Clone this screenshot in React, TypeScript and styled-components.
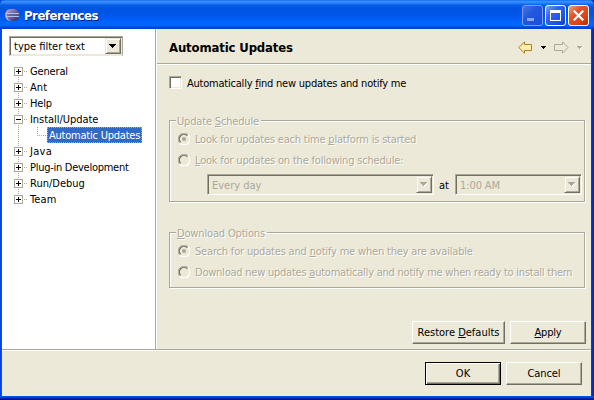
import React from "react";
import styled, { createGlobalStyle, css } from "styled-components";

const face = "#ece9d8";
const shade = "#aca899";
const dark = "#716f64";

const GlobalStyle = createGlobalStyle`
  * { box-sizing: border-box; }
  body { margin: 0; overflow: hidden; }
`;

const Window = styled.div`
  width: 594px;
  height: 400px;
  display: flex;
  flex-direction: column;
  overflow: hidden;
  background: linear-gradient(90deg, #0831d9 0, #0058ee 1px, #0058ee 2px, #0046e0 591px, #0037dc 592px, #001ea0 594px);
  font: 11px/16px "DejaVu Sans Condensed", "DejaVu Sans", sans-serif;
  color: #000;
  white-space: nowrap;
`;

const TitleBar = styled.header`
  height: 29px;
  flex: none;
  display: flex;
  align-items: flex-start;
  padding: 5px 5px 0 5px;
  border-radius: 5px 5px 0 0;
  background: linear-gradient(180deg, #0b5be8 0, #3a93ff 1px, #2b83fb 3px, #0560e8 5px, #0054e3 8px, #0055e5 14px, #005bf5 19px, #0066ff 23px, #0062fb 26px, #0046d8 27px, #003dd0 29px);
`;

const Title = styled.h1`
  margin: 3px auto 0 4px;
  font: bold 13px/16px "DejaVu Sans Condensed", "DejaVu Sans", sans-serif;
  letter-spacing: -0.47px;
  color: #fff;
  text-shadow: 1px 1px 0 #0a1f86;
`;

const Caption = styled.span<{ $kind: "min" | "max" | "close" }>`
  width: 21px;
  height: 21px;
  margin-left: 2px;
  border: 1px solid ${(p) => (p.$kind === "min" ? "#7d9cf0" : "#fff")};
  border-radius: 3px;
  display: block;
  background: ${(p) =>
    p.$kind === "close"
      ? "linear-gradient(135deg, #f0a085 0, #e2532a 35%, #dc4415 70%, #b02c08 100%)"
      : p.$kind === "max"
        ? "linear-gradient(135deg, #7ba5f9 0, #2c66ee 35%, #1e55e6 70%, #1040c8 100%)"
        : "linear-gradient(135deg, #4a74e6 0, #2259dd 40%, #164fdc 100%)"};
  svg { display: block; }
`;

const Client = styled.div`
  flex: none;
  width: 589px;
  height: 367px;
  margin-left: 2px;
  display: flex;
  flex-direction: column;
  background: ${face};
`;

const BottomEdge = styled.div`
  height: 4px;
  flex: none;
  background: linear-gradient(180deg, #0050e8 0 1px, #0040dc 1px 2px, #0020ac 2px 3px, #00138c 3px 4px);
`;

const Main = styled.div`
  height: 322px;
  flex: none;
  display: flex;
  border-bottom: 1px solid #fff;
  box-shadow: inset 0 -1px ${shade};
`;

const Sidebar = styled.aside`
  width: 155px;
  flex: none;
  height: 320px;
  padding: 7px 0 0 7px;
  background: #fff;
  border-right: 1px solid #fff;
  box-shadow: inset -1px 0 ${shade};
`;

const ComboBox = styled.div<{ $w: number; $h: number; $disabled?: boolean }>`
  width: ${(p) => p.$w}px;
  height: ${(p) => p.$h}px;
  flex: none;
  display: flex;
  justify-content: space-between;
  border: 1px solid;
  border-color: ${(p) => (p.$disabled ? `${shade} #fff #fff ${shade}` : `${shade} ${shade} ${face} ${shade}`)};
  box-shadow: inset 1px 1px ${dark}, inset -1px -1px ${face};
  background: ${(p) => (p.$disabled ? face : "#fff")};
  color: ${(p) => (p.$disabled ? shade : "#000")};
  padding: 1px 1px 1px 4px;
  line-height: ${(p) => p.$h - 2}px;
`;

const DropButton = styled.span`
  width: 16px;
  height: 100%;
  display: grid;
  place-items: center;
  background: ${face};
  border: 1px solid;
  border-color: ${face} ${dark} ${dark} ${face};
  box-shadow: inset 1px 1px #fff, inset -1px -1px ${shade};
`;

const Value = styled.span<{ $ls?: number }>`
  letter-spacing: ${(p) => p.$ls ?? 0}px;
`;

const Label = styled(Value)`
  padding-top: 2px;
`;

const Etched = styled(Label)`
  color: ${shade};
  text-shadow: 1px 1px 0 #fff;
`;

const Key = styled.span`
  text-decoration: underline;
  text-decoration-thickness: 1px;
  text-underline-offset: 1px;
  text-decoration-skip-ink: none;
`;

const Tree = styled.ul`
  list-style: none;
  margin: 7px 0 0 5px;
  padding: 0;
`;

const TreeRow = styled.li<{ $first?: boolean; $last?: boolean }>`
  height: 16px;
  display: flex;
  align-items: center;
  background: repeating-linear-gradient(180deg, ${shade} 0 1px, transparent 1px 2px) 4px ${(p) => (p.$first ? 8 : 0)}px / 1px ${(p) => (p.$last ? 8 : 16)}px no-repeat;
`;

const Expander = styled.svg`
  display: block;
  flex: none;
`;

const Connector = styled.span`
  width: 4px;
  height: 1px;
  margin: 0 2px 0 1px;
  background: repeating-linear-gradient(90deg, ${shade} 0 1px, transparent 1px 2px);
`;

const Branch = styled.span`
  width: 10px;
  height: 9px;
  margin: 0 0 8px 23px;
  background:
    repeating-linear-gradient(180deg, ${shade} 0 1px, transparent 1px 2px) 0 0 / 1px 9px no-repeat,
    repeating-linear-gradient(90deg, ${shade} 0 1px, transparent 1px 2px) 0 8px / 10px 1px no-repeat;
`;

const Selected = styled.span`
  width: 95px;
  height: 16px;
  line-height: 16px;
  padding-left: 1px;
  background: #316ac5;
  color: #fff;
  border: 1px dotted #e0a040;
  letter-spacing: -0.22px;
`;

const Page = styled.main`
  flex: 1;
  height: 320px;
  display: flex;
  flex-direction: column;
`;

const PageHeader = styled.div`
  height: 36px;
  flex: none;
  display: flex;
  align-items: center;
  padding: 0 7px 0 12px;
  border-bottom: 1px solid #fff;
  box-shadow: inset 0 -1px ${shade};
`;

const PageTitle = styled.h2`
  margin: 2px auto 0 0;
  font: bold 13px/18px "DejaVu Sans Condensed", "DejaVu Sans", sans-serif;
  letter-spacing: -0.14px;
`;

const CheckRow = styled.div`
  display: flex;
  align-items: center;
  gap: 5px;
  height: 17px;
  margin: 9px 0 0 12px;
`;

const CheckBox = styled.span`
  width: 13px;
  height: 13px;
  background: #fff;
  border: 1px solid;
  border-color: ${shade} #fff #fff ${shade};
  box-shadow: inset 1px 1px ${dark}, inset -1px -1px ${face};
`;

const Group = styled.fieldset<{ $h: number; $top: number }>`
  width: 416px;
  height: ${(p) => p.$h}px;
  flex: none;
  min-width: 0;
  margin: ${(p) => p.$top}px 0 0 12px;
  padding: 0 0 0 8px;
  border: 1px solid ${shade};
  box-shadow: 1px 1px #fff, inset 1px 1px #fff;
`;

const Legend = styled.legend<{ $w: number }>`
  width: ${(p) => p.$w}px;
  height: 15px;
  line-height: 18px;
  margin-left: -2px;
  padding: 0 1px;
  background: ${face};
`;

const RadioRow = styled.div<{ $top: number }>`
  height: 16px;
  margin-top: ${(p) => p.$top}px;
  display: flex;
  align-items: center;
  gap: 5px;
`;

const ScheduleRow = styled.div`
  display: flex;
  align-items: center;
  margin: 6px 0 0 29px;
`;

const At = styled.span`
  width: 21px;
  padding: 2px 0 0 5px;
`;

const ButtonRow = styled.div<{ $pad: string }>`
  display: flex;
  justify-content: flex-end;
  gap: 5px;
  padding: ${(p) => p.$pad};
`;

const Button = styled.button<{ $w: number; $default?: boolean; $ls?: number }>`
  width: ${(p) => p.$w}px;
  height: 23px;
  padding: 1px 0 0;
  font: inherit;
  line-height: 18px;
  letter-spacing: ${(p) => p.$ls ?? 0}px;
  color: #000;
  background: ${face};
  border: 1px solid;
  border-color: #fff ${dark} ${dark} #fff;
  box-shadow: inset -1px -1px ${shade};
  ${(p) =>
    p.$default &&
    css`
      border-color: #000;
      box-shadow: inset 1px 1px #fff, inset -1px -1px ${dark}, inset -2px -2px ${shade};
    `}
`;

const Arrows = styled.svg`
  display: block;
  margin-top: 2px;
`;

const Triangle = ({ disabled }: { disabled?: boolean }) => (
  <svg width="8" height="5" viewBox="0 0 8 5" shapeRendering="crispEdges">
    {disabled && <path d="M1 1h7v1h-1v1h-1v1h-1v1h-1v-1h-1v-1h-1v-1h-1z" fill="#fff" />}
    <path d="M0 0h7v1h-1v1h-1v1h-1v1h-1v-1h-1v-1h-1v-1h-1z" fill={disabled ? shade : "#000"} />
  </svg>
);

const Radio = ({ on }: { on?: boolean }) => (
  <svg width="12" height="12" viewBox="0 0 12 12">
    <path d="M1.8 10.2A5.5 5.5 0 0 1 10.2 1.8" fill="none" stroke={shade} />
    <path d="M2.7 9.3A4.5 4.5 0 0 1 9.3 2.7" fill="none" stroke={dark} strokeWidth="1.3" />
    <path d="M10.2 1.8A5.5 5.5 0 0 1 1.8 10.2" fill="none" stroke="#fff" strokeWidth="1.3" />
    {on && <circle cx="6" cy="6" r="2" fill={shade} />}
  </svg>
);

const EclipseIcon = () => (
  <svg width="15" height="16" viewBox="0 0 15 16">
    <defs>
      <linearGradient id="orb" x1="0" y1="0" x2="1" y2="1">
        <stop offset="0" stopColor="#b4a0cc" />
        <stop offset="0.5" stopColor="#6a5fa0" />
        <stop offset="1" stopColor="#2c2560" />
      </linearGradient>
    </defs>
    <ellipse cx="6" cy="10" rx="6" ry="6" fill="#c9a8c0" />
    <circle cx="8" cy="10" r="6.2" fill="url(#orb)" />
    <path d="M1 8.5h13M1 11.5h13" stroke="#b5c0ea" />
    <path d="M2 10h12" stroke="#57609c" />
  </svg>
);

const items: { name: string; open?: boolean; ls?: number }[] = [
  { name: "General", ls: -0.15 },
  { name: "Ant", ls: 0.1 },
  { name: "Help", ls: -0.14 },
  { name: "Install/Update", open: true, ls: -0.05 },
  { name: "Java", ls: 0.3 },
  { name: "Plug-in Development", ls: -0.27 },
  { name: "Run/Debug" },
  { name: "Team", ls: 0.1 },
];

export default function App() {
  return (
    <>
      <GlobalStyle />
      <Window>
        <TitleBar>
          <EclipseIcon />
          <Title>Preferences</Title>
          <Caption $kind="min">
            <svg width="19" height="19" shapeRendering="crispEdges"><path d="M4 12h7v3h-7z" fill="#8ba5f0" /></svg>
          </Caption>
          <Caption $kind="max">
            <svg width="19" height="19" shapeRendering="crispEdges"><path d="M4 4h11v11h-11zM5 7v7h9v-7z" fill="#fff" fillRule="evenodd" /></svg>
          </Caption>
          <Caption $kind="close">
            <svg width="19" height="19"><path d="M4.8 4.8l9.4 9.4M14.2 4.8l-9.4 9.4" stroke="#fff" strokeWidth="2.2" /></svg>
          </Caption>
        </TitleBar>
        <Client>
          <Main>
            <Sidebar>
              <ComboBox $w={114} $h={20}>
                <Value>type filter text</Value>
                <DropButton><Triangle /></DropButton>
              </ComboBox>
              <Tree>
                {items.map((item, i) => (
                  <React.Fragment key={item.name}>
                    <TreeRow $first={i === 0} $last={i === items.length - 1}>
                      <Expander width="9" height="9" shapeRendering="crispEdges">
                        <rect width="9" height="9" fill={shade} />
                        <rect x="1" y="1" width="7" height="7" fill="#fff" />
                        <path d={item.open ? "M2 4h5v1h-5z" : "M2 4h2v-2h1v2h2v1h-2v2h-1v-2h-2z"} fill="#000" />
                      </Expander>
                      <Connector />
                      <Label $ls={item.ls}>{item.name}</Label>
                    </TreeRow>
                    {item.open && (
                      <TreeRow>
                        <Branch />
                        <Selected>Automatic Updates</Selected>
                      </TreeRow>
                    )}
                  </React.Fragment>
                ))}
              </Tree>
            </Sidebar>
            <Page>
              <PageHeader>
                <PageTitle>Automatic Updates</PageTitle>
                <Arrows width="66" height="13" viewBox="0 0 66 13">
                  <path d="M0.8 6.5L6.5 0.8V3.5H13.5V9.5H6.5V12.2z" fill="#fff0b0" stroke="#b87a14" />
                  <path d="M23 5h5v1h-1v1h-1v1h-1v-1h-1v-1h-1z" fill="#000" shapeRendering="crispEdges" />
                  <path d="M50 6.5L44.5 0.8V3.5H36.5V9.5H44.5V12.2z" fill="none" stroke={shade} />
                  <path d="M60 6h5v1h-1v1h-1v1h-1v-1h-1v-1h-1z" fill="#fff" shapeRendering="crispEdges" />
                  <path d="M59 5h5v1h-1v1h-1v1h-1v-1h-1v-1h-1z" fill={shade} shapeRendering="crispEdges" />
                </Arrows>
              </PageHeader>
              <CheckRow>
                <CheckBox />
                <Label $ls={-0.22}>Automatically <Key>f</Key>ind new updates and notify me</Label>
              </CheckRow>
              <Group $h={89} $top={22}>
                <Legend $w={85}><Etched $ls={-0.17}>Update <Key>S</Key>chedule</Etched></Legend>
                <RadioRow $top={3}><Radio on /><Etched $ls={-0.2}>Look for updates each time <Key>p</Key>latform is started</Etched></RadioRow>
                <RadioRow $top={5}><Radio /><Etched $ls={-0.19}><Key>L</Key>ook for updates on the following schedule:</Etched></RadioRow>
                <ScheduleRow>
                  <ComboBox $w={227} $h={21} $disabled><Value>Every day</Value><DropButton><Triangle disabled /></DropButton></ComboBox>
                  <At>at</At>
                  <ComboBox $w={127} $h={21} $disabled><Value $ls={-0.1}>1:00 AM</Value><DropButton><Triangle disabled /></DropButton></ComboBox>
                </ScheduleRow>
              </Group>
              <Group $h={63} $top={23}>
                <Legend $w={91}><Etched $ls={-0.16}><Key>D</Key>ownload Options</Etched></Legend>
                <RadioRow $top={3}><Radio on /><Etched $ls={-0.18}>Search for updates and <Key>n</Key>otify me when they are available</Etched></RadioRow>
                <RadioRow $top={5}><Radio /><Etched $ls={-0.23}>Download new updates <Key>a</Key>utomatically and notify me when ready to install them</Etched></RadioRow>
              </Group>
              <ButtonRow $pad="33px 5px 0 0">
                <Button $w={93}>Restore <Key>D</Key>efaults</Button>
                <Button $w={76} $ls={-0.19}><Key>A</Key>pply</Button>
              </ButtonRow>
            </Page>
          </Main>
          <ButtonRow $pad="11px 9px 0 0">
            <Button $w={76} $default>OK</Button>
            <Button $w={76} $ls={-0.1}>Cancel</Button>
          </ButtonRow>
        </Client>
        <BottomEdge />
      </Window>
    </>
  );
}
